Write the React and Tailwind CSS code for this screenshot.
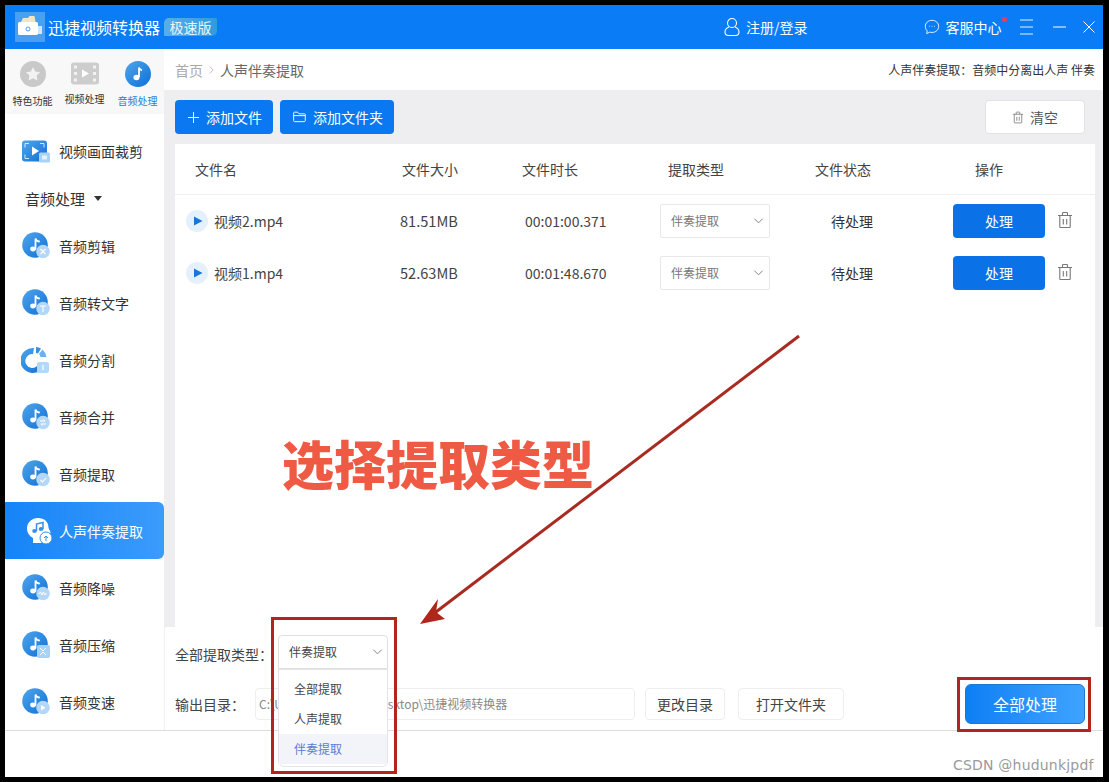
import React from "react";

const F = "font-['Noto_Sans_CJK_SC','Liberation_Sans',sans-serif]";

function Grad() {
  return (
    <svg width="0" height="0" className="absolute">
      <defs>
        <linearGradient id="ball" x1="0" y1="0" x2="1" y2="1">
          <stop offset="0" stopColor="#4fa6ec" />
          <stop offset="1" stopColor="#0f6fd6" />
        </linearGradient>
      </defs>
    </svg>
  );
}

function Note() {
  return (
    <g>
      <ellipse cx="12" cy="18" rx="2.800" ry="2.400" fill="#fff" />
      <path d="M14.500 18V7.500c.6 1.700 2 2.800 3.600 3" fill="none" stroke="#fff" strokeWidth="1.800" strokeLinecap="round" />
    </g>
  );
}

function Badge({ kind }) {
  const glyphs = {
    cut: <path d="M19.500 18l5 5M24.500 18l-5 5" stroke="#fff" strokeWidth="1.100" />,
    text: <path d="M19 18h6M22 18v6" stroke="#fff" strokeWidth="1.100" />,
    merge: <path d="M19 19h5l-1.500-1.500M25 22h-5l1.500 1.500" stroke="#fff" strokeWidth="1" fill="none" />,
    extract: <path d="M19.500 21l2 2 3.500-4" stroke="#fff" strokeWidth="1.100" fill="none" />,
    noise: <path d="M18 21l1.500-2 1.500 3 1.500-3 1.500 3 1.500-2" stroke="#fff" strokeWidth="1" fill="none" />,
    speed: <path d="M20 18l4.500 2.700-4.500 2.700z" fill="#fff" />,
  };
  return (
    <g>
      <circle cx="22" cy="20.500" r="6.800" fill="#b3d8f7" />
      {glyphs[kind]}
    </g>
  );
}

function AudioIcon({ kind }) {
  if (kind === "split") {
    return (
      <svg viewBox="0 0 30 30" className="w-[30px] h-[30px] shrink-0">
        <path d="M13 3A12.500 12.500 0 1 0 24 18h-6a7 7 0 1 1-6-9z" fill="url(#ball)" />
        <path d="M15 2a12 12 0 0 1 5 1.500l-3 5a6 6 0 0 0-2-.5z" fill="#3a8fe0" />
        <path d="M21.500 4.500a12 12 0 0 1 4 7.500h-6a6 6 0 0 0-1.500-3z" fill="#6db1ee" />
        <rect x="16" y="17" width="12" height="11" rx="2" fill="#b4d8f7" />
        <path d="M22 20v5" stroke="#fff" strokeWidth="1.200" />
      </svg>
    );
  }
  if (kind === "compress") {
    return (
      <svg viewBox="0 0 30 30" className="w-[30px] h-[30px] shrink-0">
        <circle cx="14" cy="14" r="12.800" fill="url(#ball)" />
        <Note />
        <rect x="16" y="15" width="13" height="13" rx="2" fill="#a9d3f6" />
        <path d="M19 18l3 3 3-3M19 25l3-3 3 3" stroke="#fff" strokeWidth="1" fill="none" />
      </svg>
    );
  }
  return (
    <svg viewBox="0 0 30 30" className="w-[30px] h-[30px] shrink-0">
      <circle cx="14" cy="14" r="12.800" fill="url(#ball)" />
      <Note />
      <Badge kind={kind} />
    </svg>
  );
}

function SideItem({ icon, label, active }) {
  return (
    <div
      className={
        active
          ? "h-[57px] flex items-center pl-[19px] gap-[5px] rounded-r-md bg-gradient-to-r from-[#1484f8] to-[#3a9bfb] text-white text-sm"
          : "h-[57px] flex items-center pl-4 gap-[8px] text-sm text-[#333]"
      }
    >
      {icon}
      <span className="leading-none">{label}</span>
    </div>
  );
}

function Chevron({ className }) {
  return (
    <svg viewBox="0 0 12 8" className={className} fill="none" stroke="#777" strokeWidth="1">
      <path d="M1.500 1.500L6 6l4.500-4.500" />
    </svg>
  );
}

function Trash({ className, color = "#777" }) {
  return (
    <svg viewBox="0 0 16 18" className={className} fill="none" stroke={color} strokeWidth="1.100">
      <path d="M1 4.500h14M5.500 4.500V2.300c0-.5.300-.8.800-.8h3.400c.5 0 .8.300.8.800v2.200M2.800 4.500v11.300c0 .4.300.7.700.7h9c.4 0 .7-.3.7-.7V4.500M6.300 8v5.500M9.700 8v5.500" />
    </svg>
  );
}

function FileRow({ name, size, time }) {
  return (
    <div className="flex items-center h-[52px] text-sm text-[#444]">
      <div className="w-[220px] pl-[11px] flex items-center gap-[6px]">
        <span className="w-[22px] h-[22px] rounded-full bg-[#e4f0fb] flex items-center justify-center">
          <svg viewBox="0 0 10 10" className="w-[10px] h-[10px] ml-[1px]">
            <path d="M1 0.500L9.500 5 1 9.500z" fill="#1a74d9" />
          </svg>
        </span>
        <span>{name}</span>
      </div>
      <div className="w-[120px] pl-[5px] text-[14.6px]">{size}</div>
      <div className="w-[145px] pl-[10px]">{time}</div>
      <div className="w-[145px]">
        <div className="w-[110px] h-[34px] border border-[#e8e8e8] rounded-[2px] bg-white flex items-center justify-between pl-[10px] pr-[5px] text-xs text-[#777]">
          <span>伴奏提取</span>
          <Chevron className="w-[11px] h-[8px]" />
        </div>
      </div>
      <div className="w-[148px] pl-[26px] text-[#333]">待处理</div>
      <div className="flex items-center gap-3">
        <div className="w-[92px] h-[34px] rounded-[4px] bg-[#0a72e6] text-white flex items-center justify-center">处理</div>
        <Trash className="w-[16px] h-[18px] -mt-[2px]" />
      </div>
    </div>
  );
}

export default function App() {
  return (
    <div className={`${F} relative w-[1109px] h-[782px] bg-black pt-[5px] pl-[5px] pr-[6px] pb-[5px] overflow-hidden`}>
      <Grad />
      <div className="w-full h-full bg-white flex flex-col">
        {/* title bar */}
        <div className="h-[44px] shrink-0 bg-[#0a7cf6] flex items-center text-white pl-[10px] pr-[9px] whitespace-nowrap">
          <svg viewBox="0 0 30 30" className="w-[30px] h-[30px] shrink-0">
            <rect width="30" height="30" fill="#4b9ff0" />
            <rect x="3" y="10" width="20" height="13" rx="1.500" fill="#fff" />
            <path d="M6 10l2-4h5l1.500-2h5l1 6z" fill="#f2e6c0" />
            <rect x="23" y="14" width="4" height="8" fill="#cfe6fb" />
            <circle cx="13" cy="17" r="2" fill="none" stroke="#4b9ff0" strokeWidth="1" />
          </svg>
          <span className="ml-[3px] text-base leading-none shrink-0">迅捷视频转换器</span>
          <span className="ml-[4px] w-[53px] h-[18px] shrink-0 rounded-[5px] rounded-tr-[1px] rounded-bl-[1px] bg-gradient-to-r from-[#59aee8] to-[#2f9bdc] text-sm leading-none flex items-center justify-center text-[#e8f6ff]">极速版</span>
          <svg viewBox="0 0 16 20" className="w-[16px] h-[20px] shrink-0 ml-[507px]" fill="none" stroke="#fff" strokeWidth="1.100">
            <circle cx="8" cy="6" r="4.500" />
            <path d="M5 10c-2.500 1-4 2.600-4 5 0 2 1.500 3.500 3.500 3.500h7c2 0 3.500-1.500 3.500-3.500 0-2.400-1.500-4-4-5" />
          </svg>
          <span className="ml-[6px] text-sm leading-none shrink-0">注册/登录</span>
          <svg viewBox="0 0 18 18" className="w-[16px] h-[16px] shrink-0 ml-[116px]" fill="none" stroke="#fff" strokeWidth="1">
            <path d="M9 1.500c4.400 0 7.500 3 7.500 6.800s-3.100 6.800-7.500 6.800c-.9 0-1.700-.1-2.500-.4L3 16.500l.6-3.200C2.200 12 1.500 10.300 1.500 8.300 1.500 4.500 4.600 1.500 9 1.500z" />
            <path d="M6 8.300h.6M8.700 8.300h.6M11.400 8.300h.6" strokeWidth="1.200" />
          </svg>
          <span className="relative ml-[6px] text-sm leading-none shrink-0">
            客服中心
            <span className="absolute -right-[5px] -top-[3px] w-[5px] h-[5px] rounded-full bg-[#e0405a]" />
          </span>
          <svg viewBox="0 0 13 16" className="w-[13px] h-[16px] shrink-0 ml-[18px]" stroke="#fff" strokeWidth="0.900">
            <path d="M0 1h13M0 8h13M0 15h13" />
          </svg>
          <svg viewBox="0 0 13 2" className="w-[13px] h-[2px] shrink-0 ml-[20px]" stroke="#fff" strokeWidth="1">
            <path d="M0 1h13" />
          </svg>
          <svg viewBox="0 0 12 12" className="w-[12px] h-[12px] shrink-0 ml-[17px]" stroke="#fff" strokeWidth="1">
            <path d="M0.500 0.500l11 11M11.500 0.500l-11 11" />
          </svg>
        </div>

        <div className="flex flex-1 min-h-0">
          {/* sidebar */}
          <div className="w-[159px] shrink-0 bg-white flex flex-col">
            <div className="h-[66px] bg-[#f8f8f8] flex text-[10px] leading-none text-[#333]">
              <div className="w-[53px] flex flex-col items-center pt-[12px] pl-[2px]">
                <svg viewBox="0 0 26 26" className="w-[26px] h-[26px]">
                  <circle cx="13" cy="13" r="13" fill="#c9c9c9" />
                  <path d="M13 6l2.200 4.500 4.900.7-3.500 3.400.8 4.900-4.400-2.300-4.400 2.300.8-4.900-3.500-3.400 4.900-.7z" fill="#f2f2f2" />
                </svg>
                <span className="mt-[9px] whitespace-nowrap">特色功能</span>
              </div>
              <div className="w-[53px] flex flex-col items-center pt-[13px]">
                <svg viewBox="0 0 28 22" className="w-[28px] h-[23px]">
                  <rect width="28" height="22" rx="3" fill="#cdcdcd" />
                  <path d="M11 7l7 4-7 4z" fill="#fff" />
                  <path d="M3 3h3v3H3zM3 9.500h3v3H3zM3 16h3v3H3zM22 3h3v3h-3zM22 9.500h3v3h-3zM22 16h3v3h-3z" fill="#f2f2f2" />
                </svg>
                <span className="mt-[9px] whitespace-nowrap">视频处理</span>
              </div>
              <div className="w-[53px] flex flex-col items-center pt-[12px] text-[#1f7fd6]">
                <svg viewBox="0 0 26 26" className="w-[26px] h-[26px]">
                  <circle cx="13" cy="13" r="13" fill="url(#ball)" />
                  <path d="M14 6.500c.6 1.800 2 2.600 3 2.800M14 6.500V16" stroke="#fff" strokeWidth="1.800" fill="none" />
                  <ellipse cx="11.500" cy="16.500" rx="3" ry="2.800" fill="#fff" />
                </svg>
                <span className="mt-[9px] whitespace-nowrap">音频处理</span>
              </div>
            </div>
            <div className="h-[75px] flex items-center pl-[17px] gap-[9px] text-sm text-[#333]">
              <svg viewBox="0 0 28 22" className="w-[28px] h-[23px] shrink-0">
                <rect width="25" height="21" rx="3" fill="url(#ball)" />
                <path d="M3 7V3h4M18 3h4v4M3 14v4h4" stroke="#cfe6fb" strokeWidth="1" fill="none" />
                <path d="M10 6l7 4.500-7 4.500z" fill="#fff" />
                <rect x="17" y="12" width="11" height="10" rx="1.500" fill="#a9d3f6" />
                <rect x="20" y="15" width="5" height="4" fill="#e4f1fc" />
              </svg>
              <span className="leading-none">视频画面裁剪</span>
            </div>
            <div className="h-[20px] flex items-center pl-5 gap-[9px] text-[15px] text-[#333]">
              <span className="leading-none">音频处理</span>
              <span className="w-0 h-0 border-x-[4px] border-x-transparent border-t-[5px] border-t-[#333]" />
            </div>
            <div className="pt-[9px] flex flex-col">
              <SideItem icon={<AudioIcon kind="cut" />} label="音频剪辑" />
              <SideItem icon={<AudioIcon kind="text" />} label="音频转文字" />
              <SideItem icon={<AudioIcon kind="split" />} label="音频分割" />
              <SideItem icon={<AudioIcon kind="merge" />} label="音频合并" />
              <SideItem icon={<AudioIcon kind="extract" />} label="音频提取" />
              <SideItem
                active
                label="人声伴奏提取"
                icon={
                  <svg viewBox="0 0 30 30" className="w-[30px] h-[30px] shrink-0">
                    <path d="M14 2c6.500 0 10.500 4 10.500 9.500 0 1.500 2 3.500 2 5 0 1-1.500 1.300-2 1.500v4c0 2-2 3-4 3h-3v2H9v-5C5 20 3 16.500 3 12.500 3 6.500 8 2 14 2z" fill="#fff" />
                    <ellipse cx="10.500" cy="15" rx="2.300" ry="2" fill="#3a8fe8" />
                    <ellipse cx="17" cy="13" rx="2.300" ry="2" fill="#3a8fe8" />
                    <path d="M12.500 15V8l6.500-1.500V13" fill="none" stroke="#3a8fe8" strokeWidth="1.500" />
                    <circle cx="22" cy="22" r="6" fill="#fff" stroke="#3a8fe8" strokeWidth="1" />
                    <path d="M22 25v-5M20 22l2-2 2 2" stroke="#3a8fe8" strokeWidth="1" fill="none" />
                  </svg>
                }
              />
              <SideItem icon={<AudioIcon kind="noise" />} label="音频降噪" />
              <SideItem icon={<AudioIcon kind="compress" />} label="音频压缩" />
              <SideItem icon={<AudioIcon kind="speed" />} label="音频变速" />
            </div>
          </div>

          {/* main */}
          <div className="flex-1 min-w-0 flex flex-col">
            <div className="h-[41px] shrink-0 bg-white flex items-center justify-between pl-[11px] pr-[8px]">
              <div className="flex items-center text-sm leading-none">
                <span className="text-[#aaa]">首页</span>
                <svg viewBox="0 0 6 10" className="w-[5px] h-[10px] mx-[6px]" fill="none" stroke="#aaa" strokeWidth="0.900">
                  <path d="M1 1l4 4-4 4" />
                </svg>
                <span className="text-[#666]">人声伴奏提取</span>
              </div>
              <span className="text-xs leading-none text-[#333]">人声伴奏提取：音频中分离出人声 伴奏</span>
            </div>
            <div className="h-[537px] shrink-0 bg-[#eeeef1] pl-[11px] pr-[8px] flex flex-col">
              <div className="h-[54px] shrink-0 flex items-start pt-[10px] pr-[10px] text-sm">
                <div className="w-[98px] h-[34px] rounded-[4px] bg-[#0a78f0] text-white flex items-center pl-[13px] gap-[7px]">
                  <svg viewBox="0 0 12 12" className="w-[11px] h-[11px]" stroke="#fff" strokeWidth="1">
                    <path d="M6 0v12M0 6h12" />
                  </svg>
                  <span>添加文件</span>
                </div>
                <div className="ml-[7px] w-[114px] h-[34px] rounded-[4px] bg-[#0a78f0] text-white flex items-center pl-[13px] gap-[7px]">
                  <svg viewBox="0 0 14 12" className="w-[13px] h-[12px]" fill="none" stroke="#fff" strokeWidth="1">
                    <path d="M.7 10V1.500c0-.4.300-.7.700-.7h3.600l1.500 1.800h6c.4 0 .7.300.7.700V10c0 .6-.4 1-1 1H1.700c-.6 0-1-.4-1-1zM.7 4.500h12.600" />
                  </svg>
                  <span>添加文件夹</span>
                </div>
                <div className="ml-auto w-[100px] h-[34px] rounded-[4px] bg-white border border-[#e2e2e2] text-[#555] flex items-center justify-center gap-[6px]">
                  <Trash className="w-[12px] h-[13px]" />
                  <span>清空</span>
                </div>
              </div>
              <div className="flex-1 bg-white">
                <div className="h-[51px] flex items-center border-b border-[#eeeeee] text-sm text-[#444]">
                  <div className="w-[220px] pl-5">文件名</div>
                  <div className="w-[120px] pl-[7px]">文件大小</div>
                  <div className="w-[145px] pl-[7px]">文件时长</div>
                  <div className="w-[145px] pl-2">提取类型</div>
                  <div className="w-[170px] pl-[10px]">文件状态</div>
                  <div>操作</div>
                </div>
                <div>
                  <FileRow name="视频2.mp4" size="81.51MB" time="00:01:00.371" />
                  <FileRow name="视频1.mp4" size="52.63MB" time="00:01:48.670" />
                </div>
              </div>
            </div>
            <div className="flex-1 bg-white border-l border-[#f0f0f0] pl-[10px] pr-[9px] flex flex-col">
              <div className="h-[52px] flex items-center text-sm text-[#444] pt-[2px]">
                <span>全部提取类型：</span>
              </div>
              <div className="flex items-center h-[32px] mt-[9px] relative">
                <span className="w-[80px] text-sm text-[#444]">输出目录：</span>
                <div className="w-[380px] h-[32px] border border-[#eeeeee] rounded-[4px] flex items-center pl-[3px] text-xs text-[#888] whitespace-nowrap overflow-hidden">
                  C:\Users\hudunkjpt\Desktop\迅捷视频转换器
                </div>
                <div className="ml-[10px] w-[80px] h-[32px] border border-[#eeeeee] rounded-[4px] flex items-center justify-center text-sm text-[#444]">更改目录</div>
                <div className="ml-[13px] w-[106px] h-[32px] border border-[#eeeeee] rounded-[4px] flex items-center justify-center text-sm text-[#444]">打开文件夹</div>
                <div className="ml-auto mr-[9px] w-[120px] h-[40px] rounded-[6px] bg-gradient-to-r from-[#0b7ff4] to-[#3ea3ff] border border-[#1f78d0] text-white text-base flex items-center justify-center">全部处理</div>
              </div>
            </div>
          </div>
        </div>

        {/* status strip */}
        <div className="h-[47px] shrink-0 bg-white border-t border-[#dddddd]" />
      </div>

      {/* overlays */}
      <div className="absolute left-[278px] top-[635px] w-[110px] h-[34px] bg-white border border-[#e0e0e0] rounded-t-[4px] flex items-center justify-between pl-[10px] pr-[4px] text-xs text-[#444]">
        <span>伴奏提取</span>
        <Chevron className="w-[11px] h-[8px]" />
      </div>
      <div className="absolute left-[278px] top-[669px] w-[110px] h-[98px] bg-white border border-[#e4e4e8] rounded-b-[6px] pt-[4px] text-xs text-[#444]">
        <div className="h-[30px] flex items-center pl-[15px]">全部提取</div>
        <div className="h-[30px] flex items-center pl-[15px]">人声提取</div>
        <div className="h-[30px] flex items-center pl-[15px] bg-[#f3f4f9] text-[#5b7bd0]">伴奏提取</div>
      </div>
      <div className="absolute left-[271px] top-[617px] w-[126px] h-[157px] border-[3px] border-[#b0261c]" />
      <div className="absolute left-[957px] top-[677px] w-[134px] h-[55px] border-[3px] border-[#b0261c]" />
      <svg className="absolute left-0 top-0 w-[1109px] h-[782px] pointer-events-none" viewBox="0 0 1109 782">
        <path d="M799 336L432 615" stroke="#a92a20" strokeWidth="3" fill="none" />
        <path d="M420 624L438 599L436 612L445 619z" fill="#b0261c" />
      </svg>
      <div className="absolute left-[282px] top-[431px] text-[52px] leading-[64px] font-black text-[#ef5a44] whitespace-nowrap">选择提取类型</div>
      <div className="absolute left-[953px] top-[755px] text-sm leading-5 tracking-[0.2px] text-[#9a9a9a] font-['DejaVu_Sans',sans-serif] whitespace-nowrap">CSDN @hudunkjpdf</div>
    </div>
  );
}
